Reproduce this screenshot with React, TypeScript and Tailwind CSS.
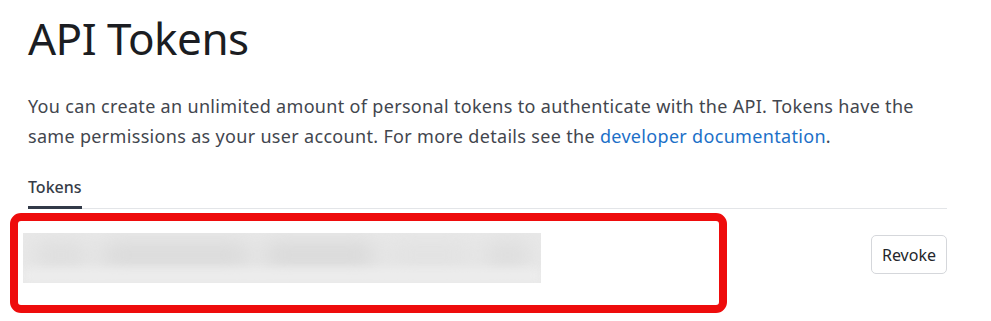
import React from "react";

const blobs = [
  { w: "w-[60px]", c: "bg-[#dedede]" },
  { w: "w-[160px]", c: "bg-[#dadada]" },
  { w: "w-[120px]", c: "bg-[#d9d9d9]" },
  { w: "w-[90px]", c: "bg-[#e2e2e2]" },
  { w: "w-[50px]", c: "bg-[#dddddd]" },
];

function BlurredToken() {
  return (
    <div className="relative h-[50px] w-[518px] overflow-hidden bg-[#e8e8e8]">
      <div className="flex h-full items-center gap-[12px] px-[10px] pb-[6px] blur-[10px]">
        {blobs.map((b, i) => (
          <span key={i} className={`h-[26px] rounded-full ${b.w} ${b.c}`} />
        ))}
      </div>
      <div className="absolute inset-x-0 bottom-0 h-[14px] bg-[#ededed] blur-[5px]" />
    </div>
  );
}

export default function App() {
  return (
    <div className="min-h-screen bg-white pl-[28px] pr-[44px] pt-[10px] font-['Noto_Sans',sans-serif]">
      <h1 className="text-[44px] leading-[56px] font-normal tracking-[-0.5px] text-[#1b1d22]">
        API Tokens
      </h1>

      <p className="mt-[25px] max-w-[905px] text-[18px] leading-[30px] tracking-[0.32px] text-[#42464e]">
        You can create an unlimited amount of personal tokens to authenticate with the API. Tokens
        have the same permissions as your user account. For more details see the{" "}
        <a href="#" className="text-[#1c70c8]">
          developer documentation
        </a>
        <span>.</span>
      </p>

      <div className="mt-[24px] flex border-b border-[#e3e5e8]">
        <div className="-mb-px border-b-[3px] border-[#323a48] pb-[7px] text-[16px] leading-[24px] font-medium text-[#363c47]">
          Tokens
        </div>
      </div>

      <div className="mt-[4px] flex items-start justify-between">
        <div className="-ml-[18px] h-[100px] w-[717px] rounded-[11px] border-[8px] border-[#ee0c0c] pl-[5px] pt-[12px]">
          <BlurredToken />
        </div>
        <button className="mt-[22px] h-[39px] w-[76px] rounded-[5px] border border-[#d5d7db] bg-white text-[16px] text-[#23262b]">
          Revoke
        </button>
      </div>
    </div>
  );
}
